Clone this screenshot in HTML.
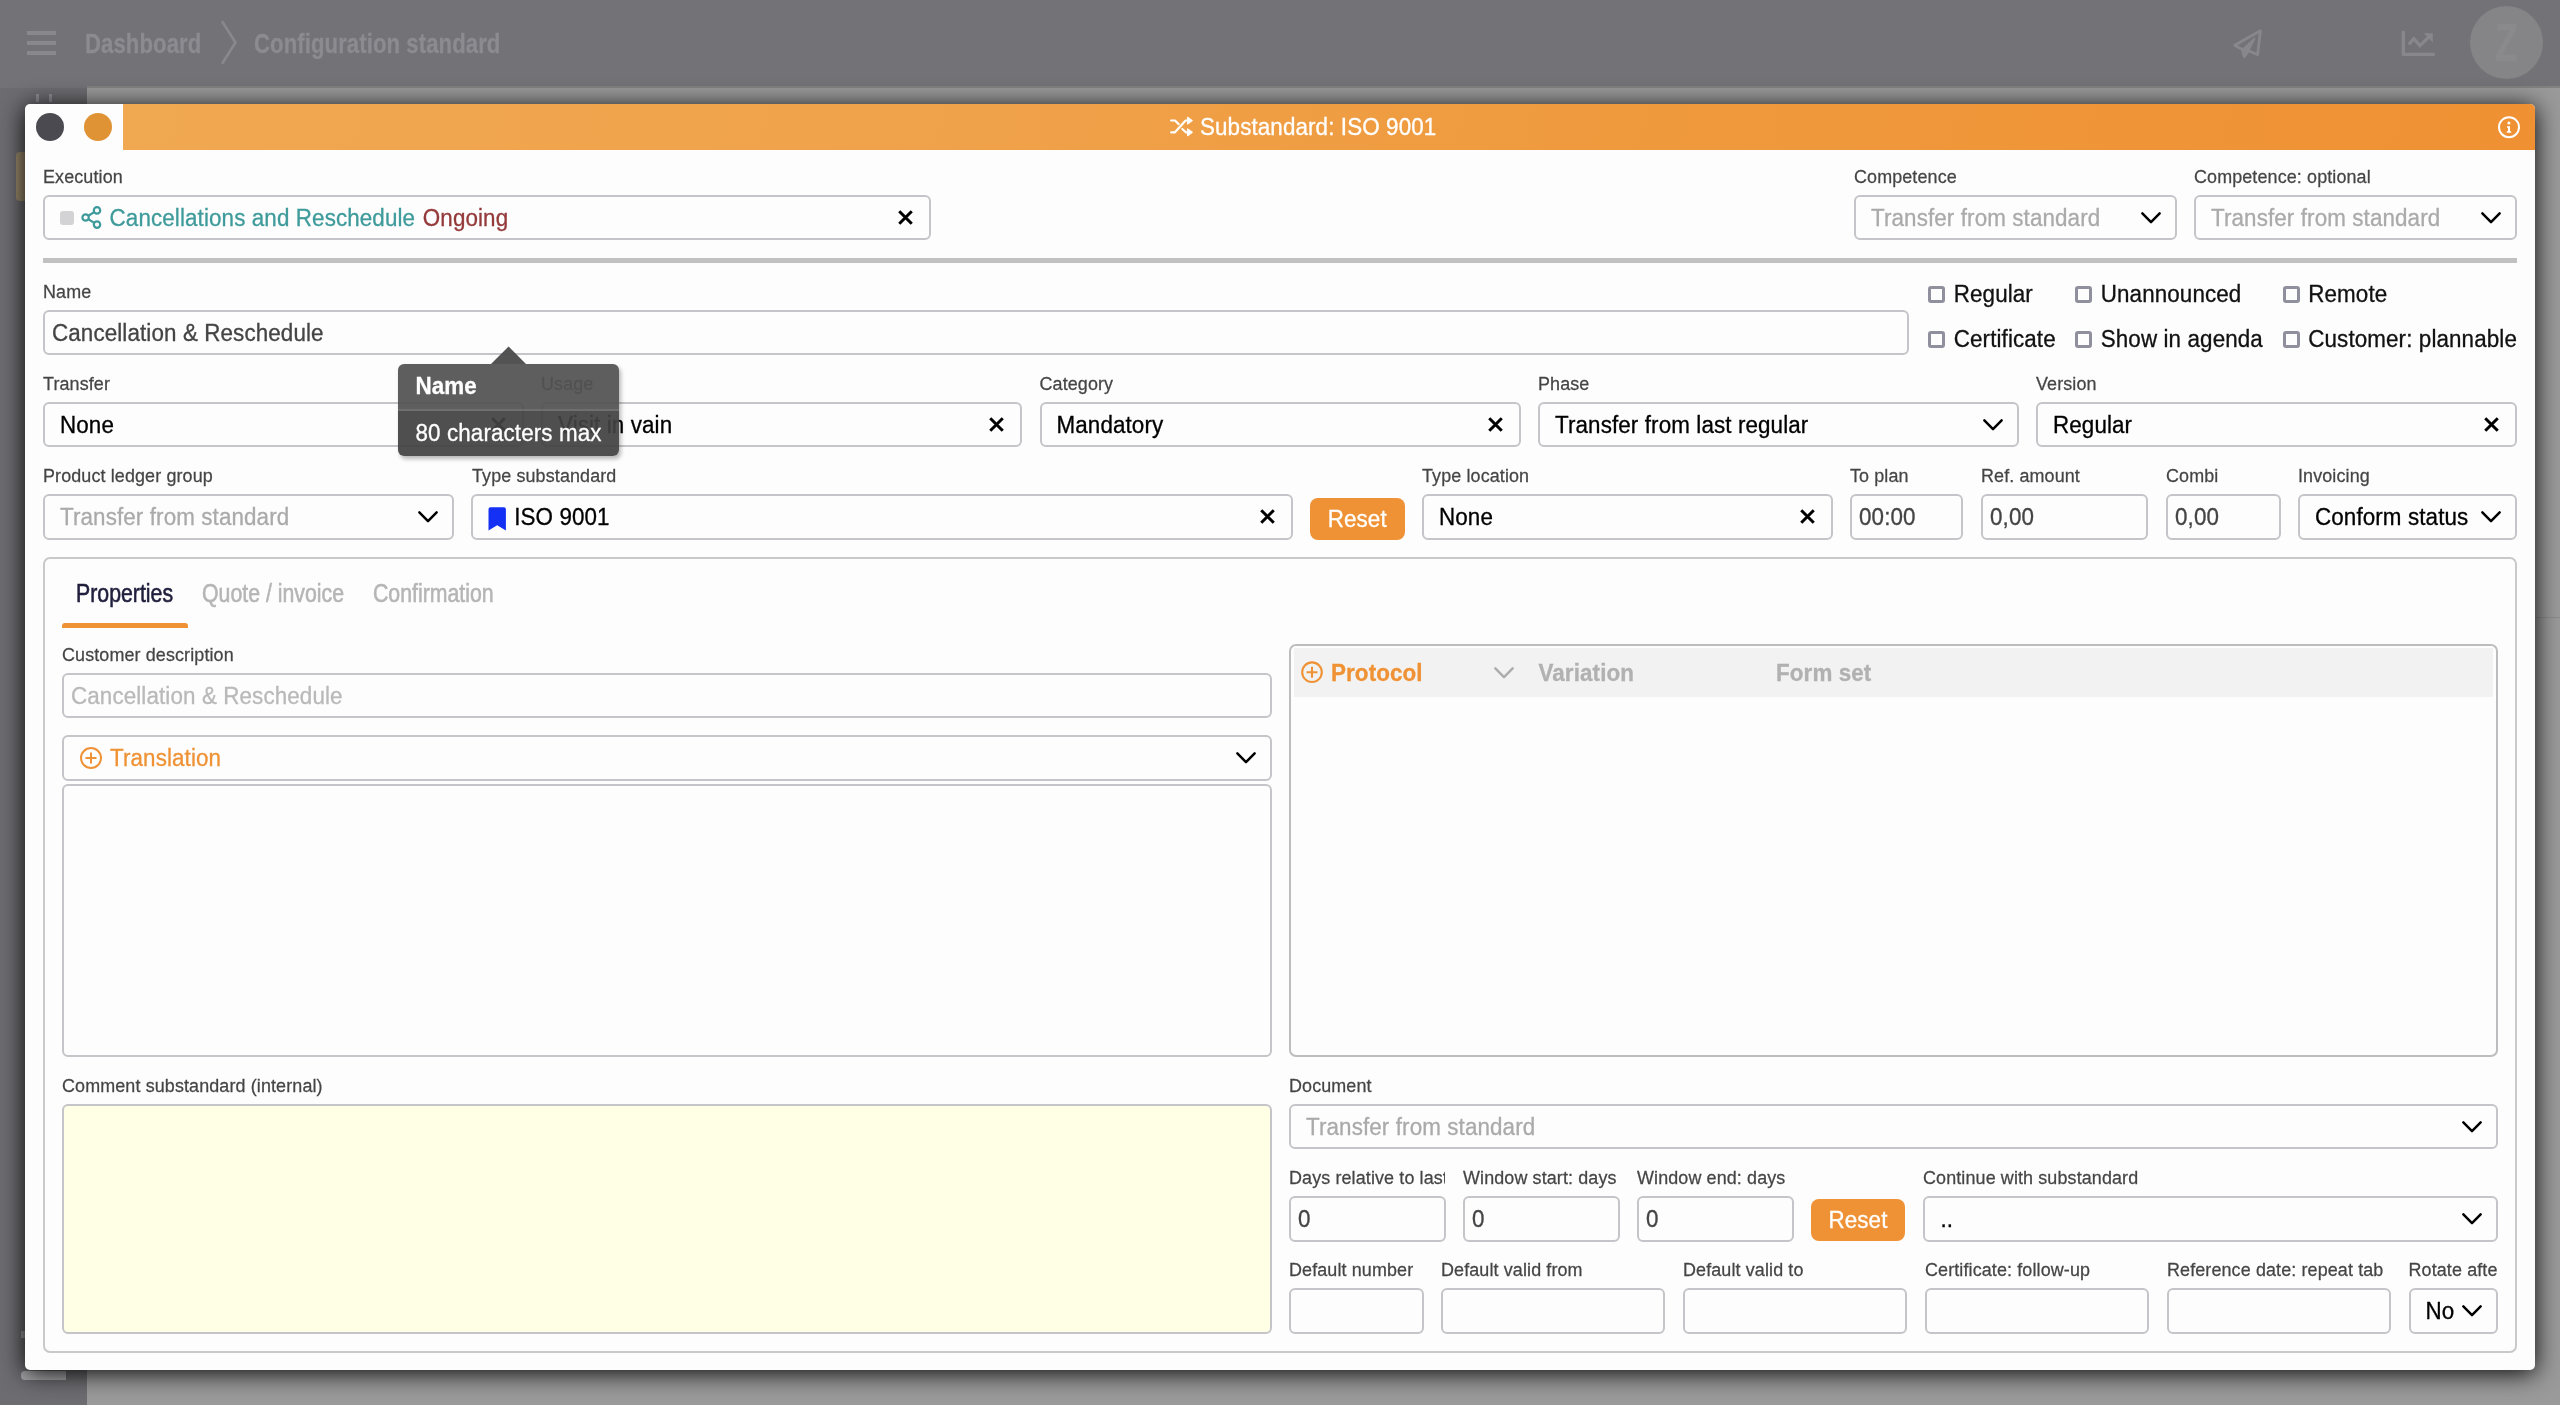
<!DOCTYPE html>
<html>
<head>
<meta charset="utf-8">
<title>Substandard: ISO 9001</title>
<style>
html,body{margin:0;padding:0;}
body{width:2560px;height:1405px;overflow:hidden;position:relative;background:#9a9a9b;font-family:"Liberation Sans",sans-serif;font-size:22.4px;color:#000;letter-spacing:0.11px;-webkit-text-stroke:0.3px currentColor;}
.abs,.lbl,.box,.btn,.cb,.cbt,svg{position:absolute;}
#layer{left:0;top:0;width:2560px;height:1405px;will-change:transform;}
#bg{left:0;top:0;width:2560px;height:1405px;will-change:transform;}
#hdr{left:0;top:0;width:2560px;height:86px;background:#727277;}
#side{left:0;top:86px;width:87px;height:1319px;background:#6c6c71;border-top:2px solid #727277;box-sizing:border-box;}
.crumb{top:24px;height:40px;line-height:40px;font-size:28px;font-weight:bold;color:#8b8b90;white-space:nowrap;transform-origin:0 50%;}
#modal{left:25px;top:104px;width:2510px;height:1266px;background:#fdfdfd;border-radius:5px;box-shadow:0 3px 24px rgba(0,0,0,0.97);}
#tbar{left:123px;top:104px;width:2412px;height:46px;border-top-right-radius:5px;background:linear-gradient(100deg,#f0a851 0%,#f0a24a 35%,#ef9a3e 60%,#ef9133 100%);}
.lbl{letter-spacing:0.13px;-webkit-text-stroke:0.25px currentColor;font-size:17.92px;line-height:22px;color:#454545;white-space:nowrap;}
.box{box-sizing:border-box;height:45px;border:2px solid #c5c5c9;border-radius:6px;background:#fdfdfd;line-height:41px;padding-left:15px;white-space:nowrap;overflow:hidden;color:#000;}
.box.in{padding-left:7px;color:#444;}
.ph{color:#aaa;}
.btn{box-sizing:border-box;background:#ef9235;color:#fff;border-radius:8px;text-align:center;height:42px;line-height:42.5px;}
.cb{box-sizing:border-box;width:17px;height:17px;border:3px solid #8f8f9d;border-radius:3px;background:#fdfdfd;}
.cbt{line-height:26px;white-space:nowrap;color:#111;}
.box svg.x{}
.tab{top:578.7px;line-height:30px;font-size:24px;color:#b5b5b5;white-space:nowrap;transform:scale(0.887,1.04);transform-origin:0 23.3px;-webkit-text-stroke:0.55px currentColor;letter-spacing:0;}
.th{top:660.8px;line-height:26px;font-size:22.4px;font-weight:bold;color:#b1b1b1;white-space:nowrap;}
.t{display:inline-block;position:relative;top:0.6px;line-height:1;transform:scaleY(1.042);transform-origin:0 84.6%;}
.lbl,.cbt,.th{transform:scaleY(1.042);}
.lbl{transform-origin:0 17.2px;}
.cbt{transform-origin:0 20.8px;}
.th{transform-origin:0 20.8px;}
</style>
</head>
<body>
<div id="bg" class="abs">
<!-- page behind overlay -->
<div id="hdr" class="abs"></div>
<div id="side" class="abs"></div>
<div class="abs" style="left:87px;top:86px;width:2473px;height:2px;background:#828283;"></div>
<!-- header content (dimmed) -->
<div class="abs" style="left:27px;top:31px;width:29px;height:4px;background:#88888d;box-shadow:0 10px 0 #88888d,0 20px 0 #88888d;"></div>
<div class="abs crumb" style="left:85px;transform:scaleX(0.79);">Dashboard</div>
<svg style="left:218px;top:18px" width="24" height="50" viewBox="0 0 24 50"><path d="M4.5 4 L17.5 24.5 L4.5 45" fill="none" stroke="#88888d" stroke-width="2.6" stroke-linecap="round" stroke-linejoin="round"/></svg>
<div class="abs crumb" style="left:254px;transform:scaleX(0.79);">Configuration standard</div>
<!-- paper plane -->
<svg style="left:2232px;top:27px" width="34" height="34" viewBox="0 0 34 34"><path d="M28.4 3.8 L2.7 18.2 L10.3 22.5 L12.2 29.7 L16.5 23.8 L25.6 27.7 Z" fill="none" stroke="#88888c" stroke-width="2.8" stroke-linejoin="round" stroke-linecap="round"/><path d="M10.3 22.5 L22.7 11.3 L16.5 23.8 L12.2 29.7 Z" fill="#88888c" stroke="#88888c" stroke-width="1.6" stroke-linejoin="round"/></svg>
<!-- chart -->
<svg style="left:2399px;top:29px" width="38" height="30" viewBox="0 0 38 30"><path d="M4.3 3.2 V25.4 H34.5" fill="none" stroke="#88888c" stroke-width="3.4" stroke-linecap="round" stroke-linejoin="round"/><path d="M10.6 14.4 L14.9 9.6 L20.9 16.7 L29 8.8" fill="none" stroke="#88888c" stroke-width="3.2" stroke-linecap="round" stroke-linejoin="miter"/><path d="M25.2 4.4 H33.5 V12.7 Z" fill="#88888c" stroke="#88888c" stroke-width="0.6" stroke-linejoin="round"/></svg>
<!-- avatar -->
<div class="abs" style="left:2470px;top:6px;width:73px;height:73px;border-radius:50%;background:#858587;"></div>
<div class="abs" style="left:2470px;top:6px;width:73px;height:73px;line-height:73px;text-align:center;font-size:53px;font-weight:bold;color:#8a8a8c;transform:scaleX(0.72);">Z</div>
<!-- sidebar remnants -->
<div class="abs" style="left:16px;top:152px;width:11px;height:49px;border-radius:4px;background:#9b8a6c;"></div>
<div class="abs" style="left:21px;top:1371px;width:45px;height:9px;border-radius:4px 0 0 4px;background:#a9a9ad;"></div>
<div class="abs" style="left:21px;top:1331px;width:5px;height:7px;background:#9a9a9e;"></div>
<div class="abs" style="left:36px;top:94px;width:3px;height:8px;background:#8f8f94;"></div>
<div class="abs" style="left:49px;top:94px;width:3px;height:8px;background:#8f8f94;"></div>
<div class="abs" style="left:2535px;top:617px;width:25px;height:1px;background:#8c8c8d;"></div>

</div>
<!-- modal -->
<div id="layer" class="abs">
<div id="modal" class="abs"></div>
<div id="tbar" class="abs"></div>
<div class="lbl" style="left:43px;top:165.5px;">Execution</div>
<div class="box " style="left:43px;top:195px;width:888px;height:45px;line-height:41px;"><span class="abs" style="left:15px;top:14px;width:14px;height:14px;border-radius:3px;background:#d3d3d5"></span><svg style="left:34px;top:7.5px" width="26" height="26" viewBox="0 0 26 26"><g fill="none" stroke="#3f9b9b" stroke-width="2.2"><circle cx="6.6" cy="12.5" r="3.2"/><circle cx="18" cy="5.4" r="3.2"/><circle cx="18" cy="19.6" r="3.2"/><path d="M9.4 10.8 L15.2 7.1 M9.4 14.2 L15.2 17.9"/></g></svg><span style="color:#3f9b9b;margin-left:49.6px"><span class="t">Cancellations and Reschedule</span></span> <span style="color:#943a3a;margin-left:1.3px"><span class="t">Ongoing</span></span><svg class="x" style="right:14.7px;top:11.8px" width="17" height="17" viewBox="0 0 17 17"><path d="M2.25 2.25 L14.75 14.75 M14.75 2.25 L2.25 14.75" stroke="#000" stroke-width="3" fill="none"/></svg></div>
<div class="lbl" style="left:1854px;top:165.5px;">Competence</div>
<div class="box " style="left:1854px;top:195px;width:323px;height:45px;line-height:41px;"><span class="ph"><span class="t">Transfer from standard</span></span><svg style="right:11.7px;top:13.5px" width="24" height="15" viewBox="0 0 24 15"><path d="M3.35 2.4 L12 11.1 L20.65 2.4" stroke="#000" stroke-width="2.5" fill="none" stroke-linecap="round" stroke-linejoin="round"/></svg></div>
<div class="lbl" style="left:2194px;top:165.5px;">Competence: optional</div>
<div class="box " style="left:2194px;top:195px;width:323px;height:45px;line-height:41px;"><span class="ph"><span class="t">Transfer from standard</span></span><svg style="right:11.7px;top:13.5px" width="24" height="15" viewBox="0 0 24 15"><path d="M3.35 2.4 L12 11.1 L20.65 2.4" stroke="#000" stroke-width="2.5" fill="none" stroke-linecap="round" stroke-linejoin="round"/></svg></div>
<div class="abs" style="left:43px;top:258px;width:2474px;height:5px;background:#c1c1c1"></div>
<div class="lbl" style="left:43px;top:280.5px;">Name</div>
<div class="box in" style="left:43px;top:310px;width:1866px;height:45px;line-height:41px;"><span class="t">Cancellation &amp; Reschedule</span></div>
<div class="cb" style="left:1928px;top:285.5px"></div><div class="cbt" style="left:1953.75px;top:281.6px">Regular</div>
<div class="cb" style="left:2074.5px;top:285.5px"></div><div class="cbt" style="left:2100.75px;top:281.6px">Unannounced</div>
<div class="cb" style="left:2282.5px;top:285.5px"></div><div class="cbt" style="left:2308.25px;top:281.6px">Remote</div>
<div class="cb" style="left:1928px;top:331px"></div><div class="cbt" style="left:1953.75px;top:327.1px">Certificate</div>
<div class="cb" style="left:2074.5px;top:331px"></div><div class="cbt" style="left:2100.75px;top:327.1px">Show in agenda</div>
<div class="cb" style="left:2282.5px;top:331px"></div><div class="cbt" style="left:2308.25px;top:327.1px">Customer: plannable</div>
<div class="lbl" style="left:43px;top:372.5px;">Transfer</div>
<div class="box " style="left:43px;top:402px;width:481px;height:45px;line-height:41px;"><span class="t">None</span><svg class="x" style="right:14.7px;top:11.8px" width="17" height="17" viewBox="0 0 17 17"><path d="M2.25 2.25 L14.75 14.75 M14.75 2.25 L2.25 14.75" stroke="#000" stroke-width="3" fill="none"/></svg></div>
<div class="lbl" style="left:541px;top:372.5px;">Usage</div>
<div class="box " style="left:541px;top:402px;width:481px;height:45px;line-height:41px;"><span class="t">Visit in vain</span><svg class="x" style="right:14.7px;top:11.8px" width="17" height="17" viewBox="0 0 17 17"><path d="M2.25 2.25 L14.75 14.75 M14.75 2.25 L2.25 14.75" stroke="#000" stroke-width="3" fill="none"/></svg></div>
<div class="lbl" style="left:1039.5px;top:372.5px;">Category</div>
<div class="box " style="left:1039.5px;top:402px;width:481px;height:45px;line-height:41px;"><span class="t">Mandatory</span><svg class="x" style="right:14.7px;top:11.8px" width="17" height="17" viewBox="0 0 17 17"><path d="M2.25 2.25 L14.75 14.75 M14.75 2.25 L2.25 14.75" stroke="#000" stroke-width="3" fill="none"/></svg></div>
<div class="lbl" style="left:1538px;top:372.5px;">Phase</div>
<div class="box " style="left:1538px;top:402px;width:481px;height:45px;line-height:41px;"><span class="t">Transfer from last regular</span><svg style="right:11.7px;top:13.5px" width="24" height="15" viewBox="0 0 24 15"><path d="M3.35 2.4 L12 11.1 L20.65 2.4" stroke="#000" stroke-width="2.5" fill="none" stroke-linecap="round" stroke-linejoin="round"/></svg></div>
<div class="lbl" style="left:2036px;top:372.5px;">Version</div>
<div class="box " style="left:2036px;top:402px;width:481px;height:45px;line-height:41px;"><span class="t">Regular</span><svg class="x" style="right:14.7px;top:11.8px" width="17" height="17" viewBox="0 0 17 17"><path d="M2.25 2.25 L14.75 14.75 M14.75 2.25 L2.25 14.75" stroke="#000" stroke-width="3" fill="none"/></svg></div>
<div class="lbl" style="left:43px;top:464.5px;">Product ledger group</div>
<div class="box " style="left:43px;top:494px;width:411px;height:46px;line-height:42px;"><span class="ph"><span class="t">Transfer from standard</span></span><svg style="right:11.7px;top:14.0px" width="24" height="15" viewBox="0 0 24 15"><path d="M3.35 2.4 L12 11.1 L20.65 2.4" stroke="#000" stroke-width="2.5" fill="none" stroke-linecap="round" stroke-linejoin="round"/></svg></div>
<div class="lbl" style="left:472px;top:464.5px;">Type substandard</div>
<div class="box " style="left:471px;top:494px;width:822px;height:46px;line-height:42px;"><svg style="left:15px;top:8.5px" width="20" height="26" viewBox="0 0 20 26"><path d="M0.5 4.3 Q0.5 2.3 2.5 2.3 H15.9 Q17.9 2.3 17.9 4.3 V25.4 L9.2 20.2 L0.5 25.4 Z" fill="#1530f5"/></svg><span style="margin-left:26.2px"><span class="t">ISO 9001</span></span><svg class="x" style="right:14.7px;top:12.3px" width="17" height="17" viewBox="0 0 17 17"><path d="M2.25 2.25 L14.75 14.75 M14.75 2.25 L2.25 14.75" stroke="#000" stroke-width="3" fill="none"/></svg></div>
<div class="btn" style="left:1310px;top:498px;width:94.5px;"><span class="t">Reset</span></div>
<div class="lbl" style="left:1422px;top:464.5px;">Type location</div>
<div class="box " style="left:1422px;top:494px;width:411px;height:46px;line-height:42px;"><span class="t">None</span><svg class="x" style="right:14.7px;top:12.3px" width="17" height="17" viewBox="0 0 17 17"><path d="M2.25 2.25 L14.75 14.75 M14.75 2.25 L2.25 14.75" stroke="#000" stroke-width="3" fill="none"/></svg></div>
<div class="lbl" style="left:1850px;top:464.5px;">To plan</div>
<div class="box in" style="left:1850px;top:494px;width:113px;height:46px;line-height:42px;"><span class="t">00:00</span></div>
<div class="lbl" style="left:1981px;top:464.5px;">Ref. amount</div>
<div class="box in" style="left:1981px;top:494px;width:167px;height:46px;line-height:42px;"><span class="t">0,00</span></div>
<div class="lbl" style="left:2166px;top:464.5px;">Combi</div>
<div class="box in" style="left:2166px;top:494px;width:115px;height:46px;line-height:42px;"><span class="t">0,00</span></div>
<div class="lbl" style="left:2298px;top:464.5px;">Invoicing</div>
<div class="box " style="left:2298px;top:494px;width:219px;height:46px;line-height:42px;"><span class="t">Conform status</span><svg style="right:11.7px;top:14.0px" width="24" height="15" viewBox="0 0 24 15"><path d="M3.35 2.4 L12 11.1 L20.65 2.4" stroke="#000" stroke-width="2.5" fill="none" stroke-linecap="round" stroke-linejoin="round"/></svg></div>
<div class="abs" style="left:43px;top:557px;width:2474px;height:795.5px;box-sizing:border-box;border:2px solid #c9c9cb;border-radius:7px;"></div>
<div class="abs tab" style="left:76px;color:#1f1f3d;">Properties</div>
<div class="abs tab" style="left:202px;">Quote / invoice</div>
<div class="abs tab" style="left:372.5px;">Confirmation</div>
<div class="abs" style="left:62px;top:622.5px;width:126px;height:5px;background:#ef9235;border-radius:3px 3px 0 0;"></div>
<div class="lbl" style="left:62px;top:643.5px;">Customer description</div>
<div class="box in" style="left:62px;top:673px;width:1210px;height:45px;line-height:41px;"><span style="color:#b9b9b9"><span class="t">Cancellation &amp; Reschedule</span></span></div>
<div class="box " style="left:62px;top:735px;width:1210px;height:46px;line-height:42px;"><svg style="left:15px;top:8.5px" width="24" height="24" viewBox="0 0 24 24"><g fill="none" stroke="#ef9235" stroke-width="2"><circle cx="12" cy="12" r="10"/><path d="M12 6.5 V17.5 M6.5 12 H17.5"/></g></svg><span style="color:#ef9235;margin-left:31px"><span class="t">Translation</span></span><svg style="right:11.7px;top:14.0px" width="24" height="15" viewBox="0 0 24 15"><path d="M3.35 2.4 L12 11.1 L20.65 2.4" stroke="#000" stroke-width="2.5" fill="none" stroke-linecap="round" stroke-linejoin="round"/></svg></div>
<div class="box " style="left:62px;top:784px;width:1210px;height:273px;line-height:269px;"></div>
<div class="lbl" style="left:62px;top:1074.5px;">Comment substandard (internal)</div>
<div class="box " style="left:62px;top:1104px;width:1210px;height:230px;line-height:226px;background:#ffffe6;"></div>
<div class="abs" style="left:1289px;top:643.5px;width:1209px;height:413px;box-sizing:border-box;border:2px solid #bdbdbf;border-radius:7px;"></div>
<div class="abs" style="left:1294px;top:648px;width:1199px;height:48.5px;background:#f2f2f2;"></div>
<svg style="left:1300px;top:660px" width="24" height="24" viewBox="0 0 24 24"><g fill="none" stroke="#ef9235" stroke-width="2.1"><circle cx="12" cy="12.2" r="9.8"/><path d="M12 6.7 V17.7 M6.5 12.2 H17.5"/></g></svg>
<div class="abs th" style="left:1331px;color:#ef9235;">Protocol</div>
<svg style="left:1492.4px;top:666px" width="24" height="15" viewBox="0 0 24 15"><path d="M3.35 2.4 L12 11.1 L20.65 2.4" stroke="#adadad" stroke-width="2.5" fill="none" stroke-linecap="round" stroke-linejoin="round"/></svg>
<div class="abs th" style="left:1538.5px;">Variation</div>
<div class="abs th" style="left:1776px;">Form set</div>
<div class="lbl" style="left:1289px;top:1074.5px;">Document</div>
<div class="box " style="left:1289px;top:1104px;width:1209px;height:45px;line-height:41px;"><span class="ph"><span class="t">Transfer from standard</span></span><svg style="right:11.7px;top:13.5px" width="24" height="15" viewBox="0 0 24 15"><path d="M3.35 2.4 L12 11.1 L20.65 2.4" stroke="#000" stroke-width="2.5" fill="none" stroke-linecap="round" stroke-linejoin="round"/></svg></div>
<div class="lbl" style="left:1289px;top:1166.5px;width:156px;overflow:hidden;">Days relative to last</div>
<div class="box in" style="left:1289px;top:1196px;width:157px;height:46px;line-height:42px;"><span class="t">0</span></div>
<div class="lbl" style="left:1463px;top:1166.5px;">Window start: days</div>
<div class="box in" style="left:1463px;top:1196px;width:157px;height:46px;line-height:42px;"><span class="t">0</span></div>
<div class="lbl" style="left:1637px;top:1166.5px;">Window end: days</div>
<div class="box in" style="left:1637px;top:1196px;width:157px;height:46px;line-height:42px;"><span class="t">0</span></div>
<div class="btn" style="left:1811px;top:1199px;width:94px;"><span class="t">Reset</span></div>
<div class="lbl" style="left:1923px;top:1166.5px;">Continue with substandard</div>
<div class="box " style="left:1923px;top:1196px;width:575px;height:46px;line-height:42px;padding-left:15.5px;"><span class="t">..</span><svg style="right:11.7px;top:14.0px" width="24" height="15" viewBox="0 0 24 15"><path d="M3.35 2.4 L12 11.1 L20.65 2.4" stroke="#000" stroke-width="2.5" fill="none" stroke-linecap="round" stroke-linejoin="round"/></svg></div>
<div class="lbl" style="left:1289px;top:1258.5px;">Default number</div>
<div class="box in" style="left:1289px;top:1288px;width:135px;height:46px;line-height:42px;"></div>
<div class="lbl" style="left:1441px;top:1258.5px;">Default valid from</div>
<div class="box in" style="left:1441px;top:1288px;width:224px;height:46px;line-height:42px;"></div>
<div class="lbl" style="left:1683px;top:1258.5px;">Default valid to</div>
<div class="box in" style="left:1683px;top:1288px;width:224px;height:46px;line-height:42px;"></div>
<div class="lbl" style="left:1925px;top:1258.5px;">Certificate: follow-up</div>
<div class="box in" style="left:1925px;top:1288px;width:224px;height:46px;line-height:42px;"></div>
<div class="lbl" style="left:2167px;top:1258.5px;">Reference date: repeat tab</div>
<div class="box in" style="left:2166.5px;top:1288px;width:224px;height:46px;line-height:42px;"></div>
<div class="lbl" style="left:2408.5px;top:1258.5px;width:89.5px;overflow:hidden;">Rotate after</div>
<div class="box " style="left:2408.5px;top:1288px;width:89.5px;height:46px;line-height:42px;"><span class="t">No</span><svg style="right:11.7px;top:14.0px" width="24" height="15" viewBox="0 0 24 15"><path d="M3.35 2.4 L12 11.1 L20.65 2.4" stroke="#000" stroke-width="2.5" fill="none" stroke-linecap="round" stroke-linejoin="round"/></svg></div>
<div class="abs" style="left:398px;top:364px;width:221px;height:91.5px;border-radius:6px;overflow:hidden;box-shadow:2px 3px 4px rgba(0,0,0,0.28);">
<div class="abs" style="left:0;top:0;width:221px;height:45px;background:rgba(82,82,82,0.93);"></div>
<div class="abs" style="left:0;top:45px;width:221px;height:2px;background:rgba(100,100,100,0.93);"></div>
<div class="abs" style="left:0;top:47px;width:221px;height:45px;background:rgba(66,66,66,0.93);"></div>
<div class="abs" style="left:17.5px;top:10px;line-height:26px;font-size:22.4px;font-weight:bold;color:#fff;white-space:nowrap;transform:scaleY(1.042);transform-origin:0 20.8px;">Name</div>
<div class="abs" style="left:17.5px;top:57px;line-height:26px;font-size:22.4px;color:#fff;white-space:nowrap;transform:scaleY(1.042);transform-origin:0 20.8px;">80 characters max</div>
</div>
<svg style="left:490px;top:346px" width="38" height="18" viewBox="0 0 38 18"><path d="M1 18 L18.6 0.6 L36 18 Z" fill="rgba(74,74,74,0.95)"/></svg>
<div class="abs" style="left:35.5px;top:113px;width:28px;height:28px;border-radius:50%;background:#4a4a50;"></div>
<div class="abs" style="left:84px;top:113px;width:28px;height:28px;border-radius:50%;background:#e09334;"></div>
<svg style="left:1168px;top:114px" width="28" height="26" viewBox="0 0 28 26"><g fill="none" stroke="#fff" stroke-width="2.2" stroke-linecap="round" stroke-linejoin="round"><path d="M3.1 6.5 H7 L10.7 10.1"/><path d="M14.3 15 L17.8 18.3 H19.6"/><path d="M3.1 18.3 H7 L17.6 6.5 H19.6"/></g><path d="M19.6 3.3 L24.3 6.6 L19.6 10 Z M19.6 14.9 L24.3 18.3 L19.6 21.7 Z" fill="#fff" stroke="#fff" stroke-width="1.1" stroke-linejoin="round"/></svg>
<div class="abs" style="left:1200px;top:114.6px;line-height:26px;color:#fff;white-space:nowrap;transform:scaleY(1.042);transform-origin:0 20.8px;">Substandard: ISO 9001</div>
<svg style="left:2496px;top:113.5px" width="26" height="26" viewBox="0 0 26 26"><circle cx="13" cy="13.2" r="10" fill="none" stroke="#fff" stroke-width="2"/><circle cx="12.9" cy="9" r="1.55" fill="#fff"/><path d="M11 12.3 H14 V17.3 H15.2 V18.8 H10.8 V17.3 H12 V13.8 H11 Z" fill="#fff"/></svg>
</div>
</body>
</html>
